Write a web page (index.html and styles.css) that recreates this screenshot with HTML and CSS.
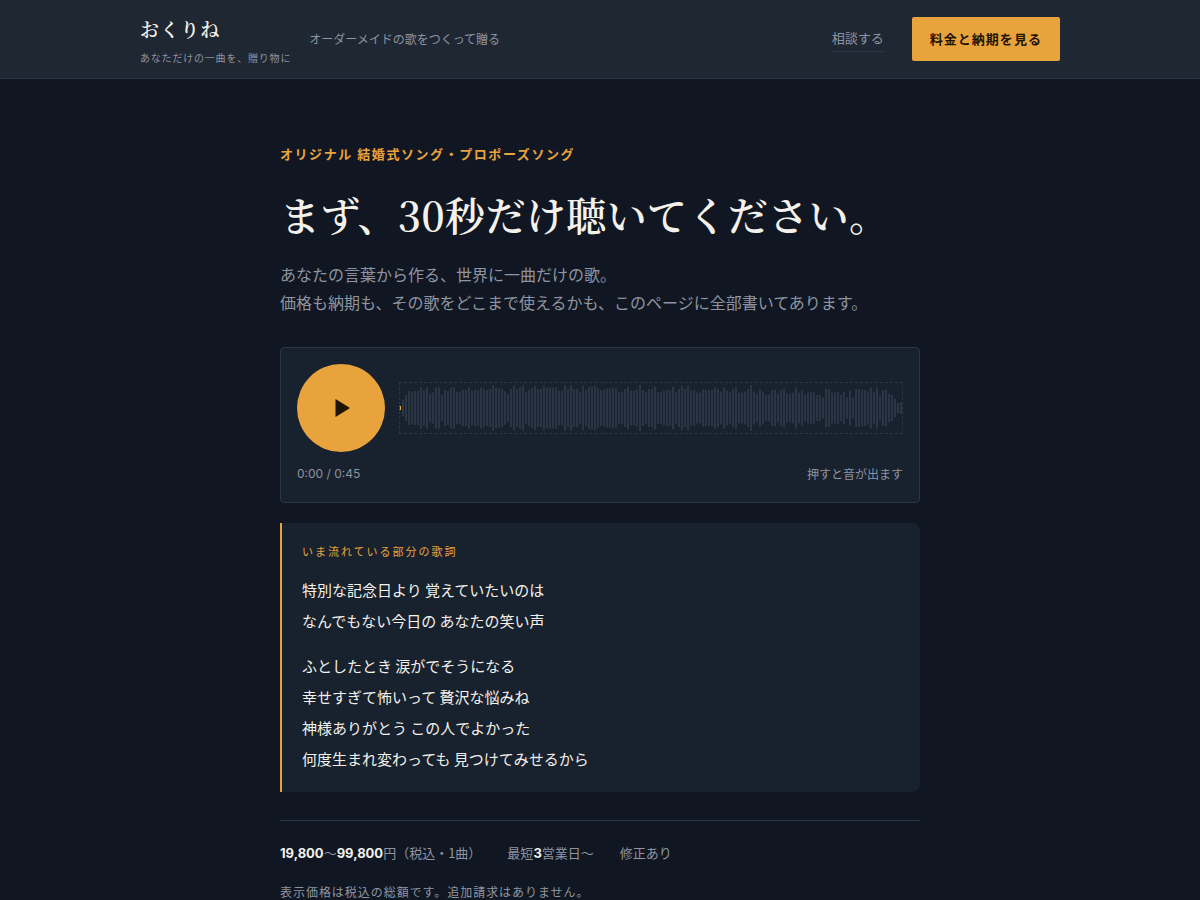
FILE: index.html
```
<!DOCTYPE html>
<html lang="ja">
<head>
  <meta charset="UTF-8">
  <meta name="viewport" content="width=device-width, initial-scale=1.0">
  <title>おくりね</title>
  <link rel="stylesheet" href="styles.css">
</head>
<body>

<header class="site-header">
  <div class="header-inner">
    <a class="brand" href="#">
      <span class="brand-name">おくりね</span>
      <span class="brand-tag">あなただけの一曲を、贈り物に</span>
    </a>
    <p class="header-note">オーダーメイドの歌をつくって贈る</p>
    <nav class="header-nav">
      <a class="nav-link" href="#contact">相談する</a>
      <a class="nav-cta" href="#price">料金と納期を見る</a>
    </nav>
  </div>
</header>

<main class="hero">
  <p class="eyebrow">オリジナル 結婚式ソング・プロポーズソング</p>
  <h1>まず、30秒だけ聴いてください。</h1>
  <p class="lead">あなたの言葉から作る、世界に一曲だけの歌。<br>価格も納期も、その歌をどこまで使えるかも、このページに全部書いてあります。</p>

  <section class="player" aria-label="試聴">
    <div class="player-row">
      <button class="play-button" type="button" aria-label="再生">
        <svg width="16" height="20" viewBox="0 0 16 20"><path d="M.5 1L15 10L.5 19Z" fill="currentColor"/></svg>
      </button>
      <div class="wave">
        <svg id="wave-bars" viewBox="0 0 504 52" preserveAspectRatio="none" aria-hidden="true"></svg>
      </div>
    </div>
    <div class="player-meta">
      <span class="time">0:00 / 0:45</span>
      <span>押すと音が出ます</span>
    </div>
  </section>

  <section class="lyrics">
    <h2>いま流れている部分の歌詞</h2>
    <p>特別な記念日より 覚えていたいのは<br>なんでもない今日の あなたの笑い声</p>
    <p>ふとしたとき 涙がでそうになる<br>幸せすぎて怖いって 贅沢な悩みね<br>神様ありがとう この人でよかった<br>何度生まれ変わっても 見つけてみせるから</p>
  </section>

  <div class="facts">
    <ul>
      <li><b>19,800</b>〜<b>99,800</b>円（税込・1曲）</li>
      <li>最短<b>3</b>営業日〜</li>
      <li>修正あり</li>
    </ul>
    <p class="facts-note">表示価格は税込の総額です。追加請求はありません。</p>
  </div>
</main>

<script src="wave.js"></script>
</body>
</html>
```
FILE: styles.css
```
:root {
    --bg: #101723;
    --panel: #18212e;
    --bar: #1f2732;
    --line: #2b3545;
    --text: #f4f1ea;
    --muted: #8f94a1;
    --amber: #e8a33d;
    --ink: #1f1503;
    --sans: "Noto Sans CJK JP", sans-serif;
    --serif: "Noto Serif CJK JP", "Noto Serif JP", "Noto Sans CJK JP", serif;
}

* {
    box-sizing: border-box;
}

body {
    margin: 0;
    background: var(--bg);
    color: var(--text);
    font-family: var(--sans);
    font-size: 16px;
}

h1, h2, p, ul {
    margin: 0;
    padding: 0;
}

a {
    color: inherit;
    text-decoration: none;
}

.site-header {
    background: var(--bar);
    border-bottom: 1px solid var(--line);
}

.header-inner {
    max-width: 960px;
    min-height: 78px;
    margin: 0 auto;
    padding: 10px 20px;
    display: flex;
    align-items: center;
    gap: 18px;
}

.brand {
    padding-top: 2px;
    display: flex;
    flex-direction: column;
    gap: 4px;
}

.brand-name {
    font-family: var(--serif);
    font-size: 19px;
    font-weight: 600;
    line-height: 32px;
    letter-spacing: 0.06em;
}

.brand-tag {
    color: var(--muted);
    font-size: 10px;
    line-height: 18px;
    letter-spacing: 0.08em;
}

.header-note {
    color: var(--muted);
    font-size: 12px;
    line-height: 20px;
}

.header-nav {
    margin-left: auto;
    display: flex;
    align-items: center;
    gap: 28px;
}

.nav-link {
    padding-bottom: 2px;
    color: var(--muted);
    font-size: 13px;
    line-height: 22px;
    border-bottom: 1px solid var(--line);
}

.nav-cta {
    padding: 0 18px;
    background: var(--amber);
    color: var(--ink);
    border-radius: 2px;
    font-size: 13px;
    font-weight: 700;
    line-height: 44px;
    letter-spacing: 0.08em;
}

.hero {
    max-width: 680px;
    margin: 0 auto;
    padding: 63px 20px;
}

.eyebrow {
    color: var(--amber);
    font-size: 13px;
    font-weight: 700;
    line-height: 24px;
    letter-spacing: 0.12em;
}

h1 {
    margin-top: 20px;
    font-family: var(--serif);
    font-size: 40px;
    font-weight: 600;
    line-height: 56px;
    letter-spacing: 0.01em;
}

.lead {
    margin: 18px 0 31px;
    color: var(--muted);
    font-size: 16px;
    line-height: 28px;
}

.player {
    padding: 16px 16px 17px;
    background: var(--panel);
    border: 1px solid var(--line);
    border-radius: 4px;
}

.player-row {
    display: flex;
    align-items: center;
    gap: 14px;
}

.play-button {
    width: 88px;
    height: 88px;
    flex: none;
    padding: 0 0 0 4px;
    display: flex;
    align-items: center;
    justify-content: center;
    background: var(--amber);
    color: var(--ink);
    border: none;
    border-radius: 50%;
    cursor: pointer;
}

.wave {
    flex: 1;
    height: 52px;
    outline: 1px dashed var(--line);
    outline-offset: -1px;
}

.wave svg {
    display: block;
    width: 100%;
    height: 100%;
    fill: var(--line);
}

.wave .played {
    fill: var(--amber);
}

.player-meta {
    margin-top: 11px;
    display: flex;
    justify-content: space-between;
    color: var(--muted);
    font-size: 12px;
    line-height: 22px;
}

.time {
    font-family: Inter, sans-serif;
}

.lyrics {
    margin-top: 20px;
    padding: 17px 20px 18px;
    background: var(--panel);
    border-left: 2px solid var(--amber);
    border-radius: 0 8px 8px 0;
}

.lyrics h2 {
    margin-bottom: 12px;
    color: var(--amber);
    font-size: 11px;
    font-weight: 400;
    line-height: 22px;
    letter-spacing: 0.18em;
}

.lyrics p {
    font-size: 15px;
    line-height: 31px;
}

.lyrics p + p {
    margin-top: 14px;
}

.facts {
    margin-top: 28px;
    padding-top: 20px;
    border-top: 1px solid var(--line);
    color: var(--muted);
    font-size: 13px;
    line-height: 24px;
}

.facts ul {
    display: flex;
    flex-wrap: wrap;
    gap: 8px 26px;
    list-style: none;
}

.facts b {
    color: var(--text);
    font-family: Inter, sans-serif;
    font-weight: 700;
}

.facts-note {
    margin-top: 15px;
    font-size: 12px;
    letter-spacing: 0.08em;
}
```
FILE: wave.js
```
// bar heights of the 45s preview
const peaks = [
  4, 17, 26, 34, 33, 34, 34, 41, 36, 41, 28, 31, 41, 41, 27, 36, 34, 41, 41, 33, 33, 37, 36, 41, 35, 36, 36,
  41, 38, 36, 38, 46, 41, 39, 38, 33, 28, 38, 44, 38, 41, 45, 32, 36, 39, 43, 38, 38, 43, 41, 41, 41, 41, 35, 35,
  46, 39, 46, 38, 38, 32, 44, 37, 42, 43, 45, 39, 36, 37, 39, 39, 41, 39, 32, 32, 38, 43, 35, 35, 38, 46, 36, 32,
  38, 38, 43, 32, 32, 35, 36, 35, 43, 32, 38, 45, 38, 45,
  35, 35, 31, 31, 38, 37, 36, 36, 41, 38, 33, 41, 35, 31, 38, 41, 31, 31, 33, 38, 46, 33, 29, 38, 33, 26, 26,
  36, 36, 29, 36, 39, 29, 29, 31, 41, 31, 35, 26, 31, 33, 31, 26, 26, 21, 38, 38, 31, 31, 33, 26, 33, 21, 35, 21,
  38, 37, 37, 36, 33, 41, 33, 41, 25, 36, 36, 28, 26, 19, 11, 11
];
const svg = document.getElementById("wave-bars");

peaks.forEach((h, i) => {
  const bar = document.createElementNS("http://www.w3.org/2000/svg", "rect");
  bar.setAttribute("x", i * 3);
  bar.setAttribute("y", 26 - h / 2);
  bar.setAttribute("width", 2);
  bar.setAttribute("height", h);
  if (i === 0) bar.setAttribute("class", "played");
  svg.appendChild(bar);
});
```
